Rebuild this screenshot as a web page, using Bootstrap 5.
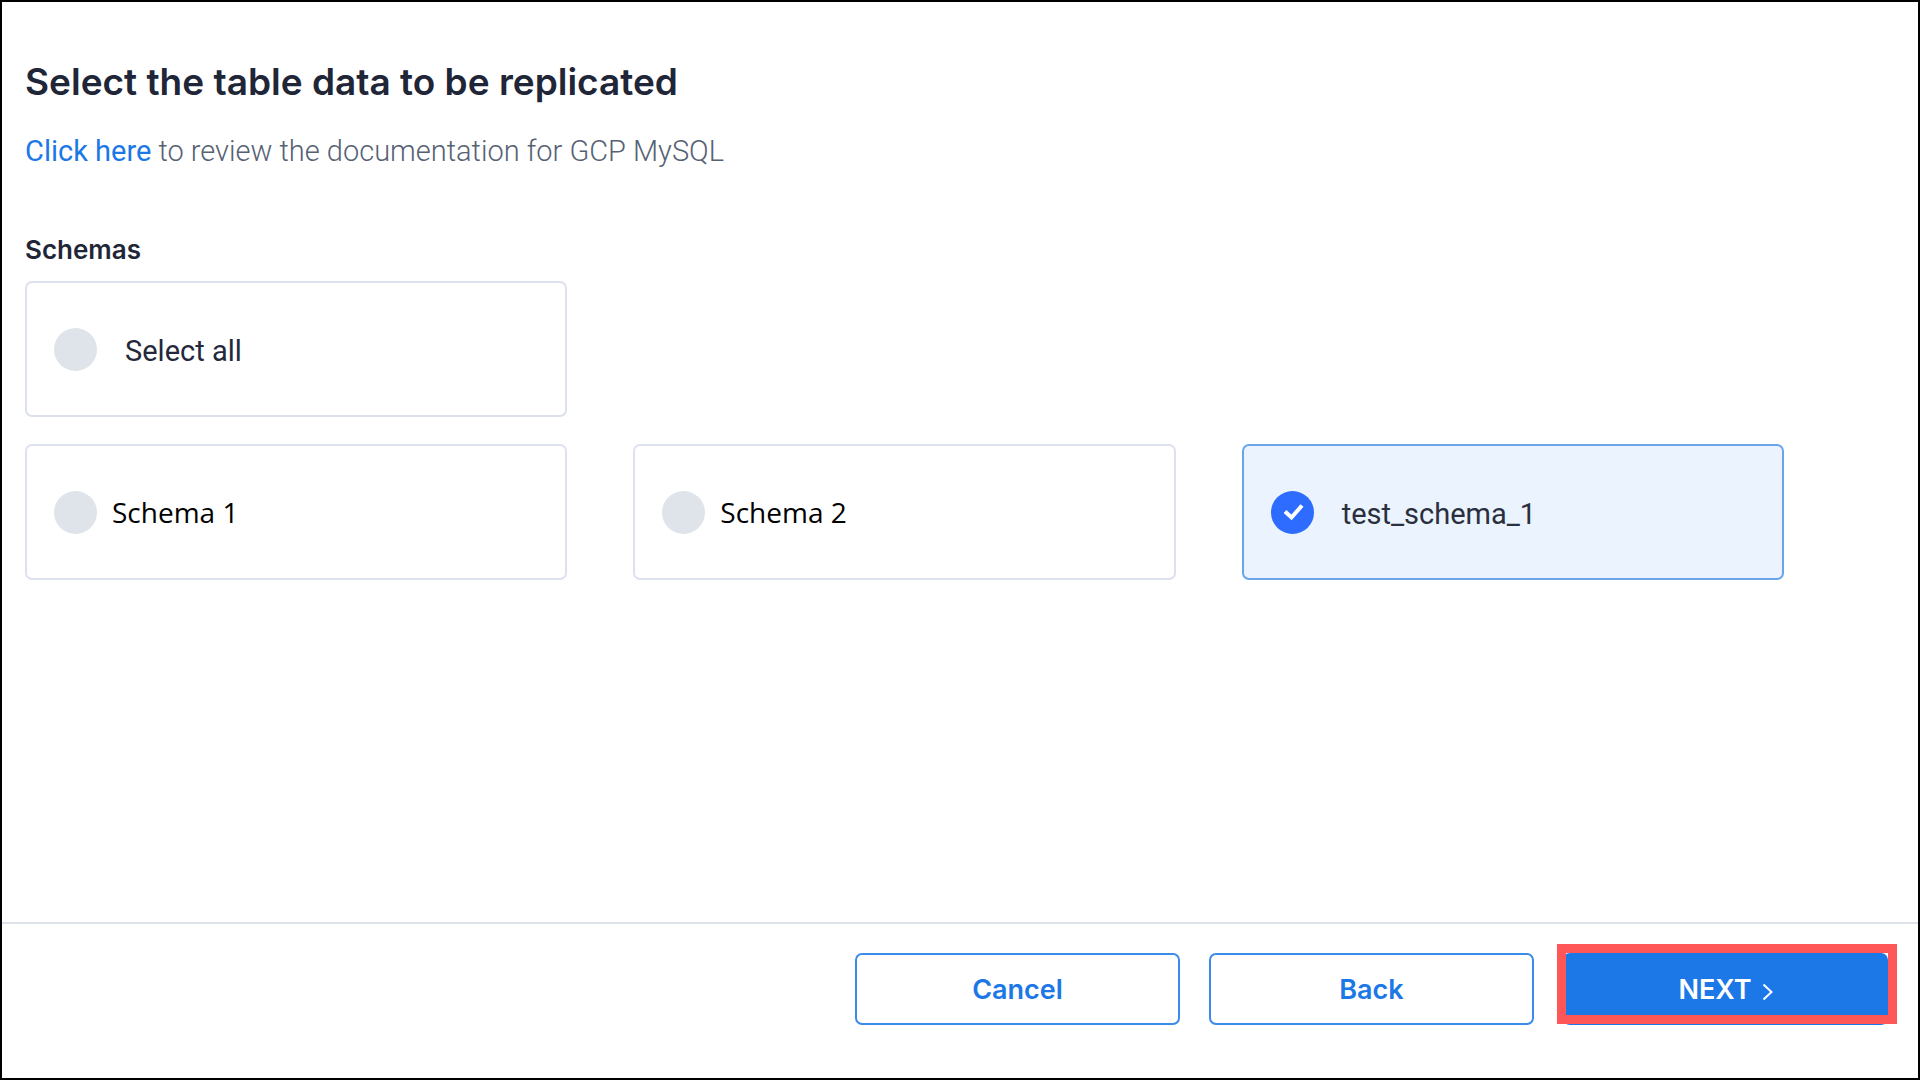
<!DOCTYPE html>
<html lang="en">
<head>
<meta charset="utf-8">
<meta name="viewport" content="width=device-width, initial-scale=1">
<title>Select the table data to be replicated</title>
<link href="https://cdn.jsdelivr.net/npm/bootstrap@5.3.0/dist/css/bootstrap.min.css" rel="stylesheet">
<style>
  body { font-family: Roboto, "Liberation Sans", sans-serif; background: #fff; color: #24283a; font-size: 29px; line-height: 36px; }
  .page-frame { border: 2px solid #000; }
  .page-content { padding: 54px 134px 40px 23px; }
  .page-title { font-family: Inter, sans-serif; font-weight: 600; font-size: 37px; line-height: 52px; color: #1f2637; margin-bottom: 25px; }
  .intro { font-weight: 300; font-size: 29px; line-height: 36px; color: #566273; margin-bottom: 63px; }
  .intro a { font-weight: 400; color: #1c78e6; text-decoration: none; }
  .group-title { font-family: Inter, sans-serif; font-weight: 600; font-size: 26px; line-height: 36px; color: #1f2637; margin-bottom: 13px; }
  .schema-row { --bs-gutter-x: 66px; --bs-gutter-y: 27px; }
  .schema-option { min-height: 136px; padding: 0 27px; border: 2px solid #dce1ed; border-radius: 7px; gap: 28px; cursor: pointer; }
  .schema-option span { padding-top: 4px; }
  .schema-option.plain { gap: 15px; font-family: "Open Sans", sans-serif; font-size: 28px; color: #000; }
  .schema-option.plain span { padding-top: 0; }
  .schema-option.selected { border-color: #69a5eb; background: #ebf3ff; color: #2a2f3d; }
  .schema-option .form-check-input { width: 43px; height: 43px; margin: 0; border: 0; border-radius: 50%; background-color: #dfe4eb; flex: none; }
  .schema-option .form-check-input:checked { background-color: #2e6cff; background-size: 100% 100%;
    background-image: url("data:image/svg+xml,%3Csvg xmlns='http://www.w3.org/2000/svg' viewBox='0 0 43 43'%3E%3Cpath d='M14 20.500l6.500 6 10.500-12' fill='none' stroke='%23fff' stroke-width='4'/%3E%3C/svg%3E"); }
  .page-footer { border-top: 2px solid #dce1ea; padding: 29px 30px 53px; gap: 29px; }
  .action { flex: 0 1 325px; }
  .action .btn { height: 72px; padding: 8px 12px 6px; font-family: Inter, sans-serif; font-weight: 600; font-size: 27px; line-height: 36px; border: 2px solid #3c8ae9; border-radius: 7px; color: #1c78e6; background: #fff; }
  .action .btn-next { background: #1c78e6; border-color: #1c78e6; color: #fff; gap: 10px; }
  .btn-next svg { margin-top: 4px; }
  .highlight { inset: -9px -9px 1px -6px; border: 9px solid #ff5757; pointer-events: none; }
</style>
</head>
<body>
<div class="page-frame min-vh-100 d-flex flex-column">
  <main class="page-content flex-grow-1">
    <h1 class="page-title">Select the table data to be replicated</h1>
    <p class="intro"><a href="#">Click here</a> to review the documentation for GCP MySQL</p>
    <h2 class="group-title">Schemas</h2>
    <div class="row schema-row">
      <div class="col-4">
        <label class="schema-option d-flex align-items-center" for="all"><input class="form-check-input" type="checkbox" id="all"><span>Select all</span></label>
      </div>
      <div class="w-100 m-0"></div>
      <div class="col-4">
        <label class="schema-option plain d-flex align-items-center" for="s1"><input class="form-check-input" type="checkbox" id="s1"><span>Schema 1</span></label>
      </div>
      <div class="col-4">
        <label class="schema-option plain d-flex align-items-center" for="s2"><input class="form-check-input" type="checkbox" id="s2"><span>Schema 2</span></label>
      </div>
      <div class="col-4">
        <label class="schema-option selected d-flex align-items-center" for="s3"><input class="form-check-input" type="checkbox" id="s3" checked><span>test_schema_1</span></label>
      </div>
    </div>
  </main>
  <footer class="page-footer d-flex justify-content-end">
    <div class="action"><button type="button" class="btn w-100">Cancel</button></div>
    <div class="action"><button type="button" class="btn w-100">Back</button></div>
    <div class="action position-relative">
      <button type="button" class="btn btn-next w-100 d-flex align-items-center justify-content-center">NEXT
        <svg width="11" height="18" viewBox="0 0 11 18" fill="none" stroke="currentColor" stroke-width="2" aria-hidden="true"><path d="M1.500 1.500L9.500 9l-8 7.500"/></svg>
      </button>
      <span class="highlight position-absolute"></span>
    </div>
  </footer>
</div>
<script src="https://cdn.jsdelivr.net/npm/bootstrap@5.3.0/dist/js/bootstrap.bundle.min.js"></script>
</body>
</html>
